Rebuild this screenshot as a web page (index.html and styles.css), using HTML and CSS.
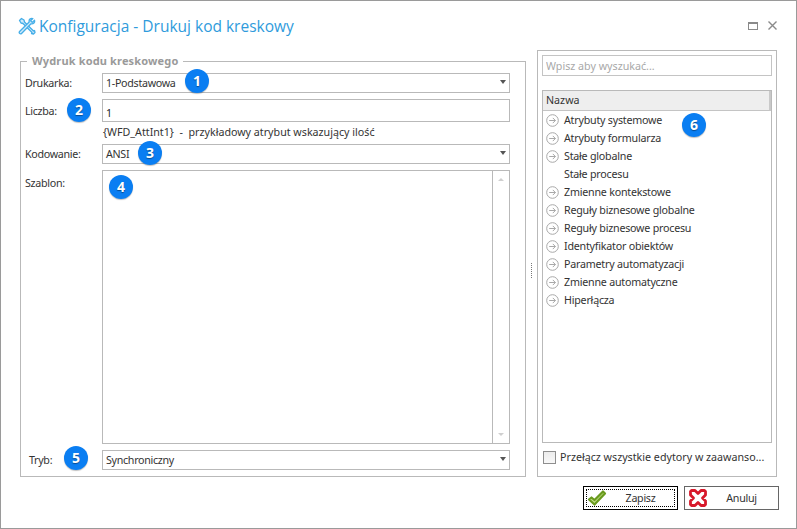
FILE: index.html
```html
<!DOCTYPE html>
<html lang="pl">
<head>
    <meta charset="UTF-8">
    <title>Konfiguracja - Drukuj kod kreskowy</title>
    <link rel="stylesheet" href="styles.css">
</head>
<body>
    <div class="window">
        <div class="title-bar">
            <svg class="title-icon" width="18" height="18" viewBox="0 0 18 18">
                <path d="M1.5 3.5 L3.5 1.5 L6 3 L6.5 5 L15.5 14 L16.5 13.5 L17 15.5 L15.5 17 L13.5 16.5 L14 15.5 L5 6.5 L3 6 Z" fill="#cfeafa" stroke="#45aee8" stroke-width="1.3" stroke-linejoin="round"/>
                <path d="M16.5 3.2 L14.2 5.4 L12.6 3.8 L14.8 1.5 C12.6 0.8 10.6 2.6 11.2 5 L1.8 14.2 C1 15 1 15.8 1.6 16.4 C2.2 17 3 17 3.8 16.2 L13 6.8 C15.4 7.4 17.2 5.4 16.5 3.2 Z" fill="#cfeafa" stroke="#45aee8" stroke-width="1.3" stroke-linejoin="round"/>
            </svg>
            <h1 class="title">Konfiguracja - Drukuj kod kreskowy</h1>
            <div class="win-buttons">
                <svg width="10" height="8" viewBox="0 0 10 8"><rect x="0.5" y="0.5" width="9" height="7" fill="none" stroke="#8a8a8a"/><rect x="0" y="0" width="10" height="2" fill="#8a8a8a"/></svg>
                <svg width="9" height="9" viewBox="0 0 9 9"><path d="M0.5 0.5 L8.5 8.5 M8.5 0.5 L0.5 8.5" stroke="#8a8a8a" stroke-width="1.4"/></svg>
            </div>
        </div>

        <div class="main">
            <fieldset class="group">
                <legend>Wydruk kodu kreskowego</legend>
                <div class="form-row row-select">
                    <label>Drukarka:</label>
                    <div class="select">1-Podstawowa<span class="arrow"></span></div>
                </div>
                <div class="form-row row-count">
                    <label>Liczba:</label>
                    <input class="input" type="text" value="1">
                </div>
                <div class="hint">{WFD_AttInt1}&nbsp; - &nbsp;przykładowy atrybut wskazujący ilość</div>
                <div class="form-row row-select">
                    <label>Kodowanie:</label>
                    <div class="select">ANSI<span class="arrow"></span></div>
                </div>
                <div class="form-row row-template">
                    <label>Szablon:</label>
                    <div class="template">
                        <div class="scrollbar">
                            <span class="scroll-up"></span>
                            <span class="scroll-down"></span>
                        </div>
                    </div>
                </div>
                <div class="form-row row-select">
                    <label class="label-mode">Tryb:</label>
                    <div class="select">Synchroniczny<span class="arrow"></span></div>
                </div>
            </fieldset>

            <div class="splitter"><span class="grip"></span></div>

            <div class="side">
                <input class="search" type="text" placeholder="Wpisz aby wyszukać...">
                <div class="tree">
                    <div class="tree-head">Nazwa</div>
                    <div class="tree-row"><svg class="go" viewBox="0 0 13 13"><use href="#go-icon"/></svg>Atrybuty systemowe</div>
                    <div class="tree-row"><svg class="go" viewBox="0 0 13 13"><use href="#go-icon"/></svg>Atrybuty formularza</div>
                    <div class="tree-row"><svg class="go" viewBox="0 0 13 13"><use href="#go-icon"/></svg>Stałe globalne</div>
                    <div class="tree-row"><span class="go"></span>Stałe procesu</div>
                    <div class="tree-row"><svg class="go" viewBox="0 0 13 13"><use href="#go-icon"/></svg>Zmienne kontekstowe</div>
                    <div class="tree-row"><svg class="go" viewBox="0 0 13 13"><use href="#go-icon"/></svg>Reguły biznesowe globalne</div>
                    <div class="tree-row"><svg class="go" viewBox="0 0 13 13"><use href="#go-icon"/></svg>Reguły biznesowe procesu</div>
                    <div class="tree-row"><svg class="go" viewBox="0 0 13 13"><use href="#go-icon"/></svg>Identyfikator obiektów</div>
                    <div class="tree-row"><svg class="go" viewBox="0 0 13 13"><use href="#go-icon"/></svg>Parametry automatyzacji</div>
                    <div class="tree-row"><svg class="go" viewBox="0 0 13 13"><use href="#go-icon"/></svg>Zmienne automatyczne</div>
                    <div class="tree-row"><svg class="go" viewBox="0 0 13 13"><use href="#go-icon"/></svg>Hiperłącza</div>
                </div>
                <div class="switch">
                    <span class="checkbox"></span>
                    <span>Przełącz wszystkie edytory w zaawanso...</span>
                </div>
            </div>
        </div>

        <div class="footer">
            <button class="btn btn-default">
                <span class="btn-focus">
                    <svg width="20" height="18" viewBox="0 0 20 18"><path d="M2 10.5 L4.5 8.5 L7.5 11 L16 2.5 L18 4.5 L7.5 15.5 Z" fill="#bcdc80" stroke="#6a9a1e" stroke-width="2.2" stroke-linejoin="round"/></svg>
                    <span class="btn-text">Zapisz</span>
                </span>
            </button>
            <button class="btn">
                <span class="btn-focus no-focus">
                    <svg width="20" height="18" viewBox="0 0 18 18"><path d="M2.5 1.5 L6 1.5 L9 4.5 L12 1.5 L15.5 1.5 L16.5 2.5 L16.5 6 L13.5 9 L16.5 12 L16.5 15.5 L15.5 16.5 L12 16.5 L9 13.5 L6 16.5 L2.5 16.5 L1.5 15.5 L1.5 12 L4.5 9 L1.5 6 L1.5 2.5 Z" fill="#fff" stroke="#d7182a" stroke-width="2.8" stroke-linejoin="round"/></svg>
                    <span class="btn-text">Anuluj</span>
                </span>
            </button>
        </div>

        <span class="badge badge-1">1</span>
        <span class="badge badge-2">2</span>
        <span class="badge badge-3">3</span>
        <span class="badge badge-4">4</span>
        <span class="badge badge-5">5</span>
        <span class="badge badge-6">6</span>
    </div>

    <svg width="0" height="0" class="defs">
        <symbol id="go-icon" viewBox="0 0 13 13">
            <circle cx="6.5" cy="6.5" r="5.8" fill="none" stroke="#a8a8a8"/>
            <path d="M3.2 6.5 H9.4 M6.8 3.9 L9.4 6.5 L6.8 9.1" fill="none" stroke="#a8a8a8"/>
        </symbol>
    </svg>
</body>
</html>
```

FILE: styles.css
```css
* {
    box-sizing: border-box;
}
html, body {
    margin: 0;
    padding: 0;
    background: #fff;
}
body {
    font-family: "Noto Sans", Arial, sans-serif;
    font-size: 10.7px;
    color: #333;
}
.window {
    position: relative;
    width: 797px;
    height: 529px;
    border: 1px solid #9a9a9a;
    background: #fff;
    overflow: hidden;
}
.title-bar {
    display: flex;
    align-items: center;
    height: 49px;
    padding: 0 19px 0 17px;
}
.title-icon {
    margin-right: 3px;
}
.title {
    margin: 0;
    font-family: "Open Sans", Arial, sans-serif;
    font-size: 15.5px;
    font-weight: 400;
    color: #2f9bdc;
}
.win-buttons {
    display: flex;
    align-items: center;
    gap: 10px;
    margin-left: auto;
}
.main {
    display: flex;
    height: 427px;
    padding: 0 19px;
}
.group {
    width: 506px;
    height: 423px;
    margin: 4px 0 0;
    padding: 5px 15px 0 4px;
    border: 1px solid #b9b9b9;
    min-width: 0;
}
.group legend {
    margin-left: 2px;
    padding: 0 5px;
    font-size: 11px;
    font-weight: 700;
    letter-spacing: 0.15px;
    line-height: 14px;
    color: #9a9a9a;
}
.form-row {
    display: flex;
}
.form-row label {
    width: 77px;
    flex: none;
    letter-spacing: -0.3px;
}
.row-select {
    height: 20px;
    margin-bottom: 6px;
    align-items: center;
}
.row-count {
    height: 23px;
    align-items: center;
}
.label-mode {
    padding-left: 4px;
}
.select {
    position: relative;
    flex: 1;
    height: 20px;
    padding: 0 3px;
    border: 1px solid #b9b9b9;
    letter-spacing: -0.3px;
    line-height: 18px;
}
.arrow {
    position: absolute;
    right: 3px;
    top: 6px;
    width: 0;
    height: 0;
    border-left: 3.5px solid transparent;
    border-right: 3.5px solid transparent;
    border-top: 4px solid #555;
}
.input {
    flex: 1;
    height: 23px;
    padding: 4px 3px 0;
    border: 1px solid #b9b9b9;
    border-radius: 0;
    outline: none;
    font: inherit;
    color: #222;
}
.hint {
    height: 22px;
    padding: 3px 0 0 78px;
    line-height: 14px;
}
.row-template {
    height: 274px;
    margin-bottom: 6px;
}
.row-template label {
    padding-top: 6px;
}
.template {
    flex: 1;
    display: flex;
    justify-content: flex-end;
    border: 1px solid #b9b9b9;
}
.scrollbar {
    position: relative;
    width: 17px;
    border-left: 1px solid #b9b9b9;
}
.scroll-up, .scroll-down {
    position: absolute;
    left: 5px;
    width: 0;
    height: 0;
    border-left: 3px solid transparent;
    border-right: 3px solid transparent;
}
.scroll-up {
    top: 7px;
    border-bottom: 3px solid #cfcfcf;
}
.scroll-down {
    bottom: 7px;
    border-top: 3px solid #cfcfcf;
}
.splitter {
    display: flex;
    align-items: center;
    justify-content: center;
    width: 11px;
    padding-top: 14px;
}
.grip {
    width: 1px;
    height: 15px;
    background: repeating-linear-gradient(#777 0 1px, transparent 1px 2px);
}
.side {
    display: flex;
    flex-direction: column;
    width: 240px;
    padding: 4px 4px 0;
    border: 1px solid #b9b9b9;
}
.search {
    flex: none;
    height: 21px;
    padding: 0 3px;
    border: 1px solid #c4c4c4;
    border-radius: 0;
    outline: none;
    font: inherit;
}
.search::placeholder {
    color: #a8a8a8;
    opacity: 1;
}
.tree {
    flex: none;
    height: 353px;
    margin-top: 14px;
    border: 1px solid #b9b9b9;
}
.tree-head {
    height: 20px;
    padding-left: 3px;
    border-bottom: 1px solid #c4c4c4;
    border-right: 2px solid #c9c9c9;
    background: #eeeeee;
    line-height: 18px;
}
.tree-row {
    display: flex;
    align-items: center;
    height: 18px;
    padding-left: 3px;
    letter-spacing: -0.22px;
}
.go {
    flex: none;
    width: 13px;
    height: 13px;
    margin-right: 5px;
}
.switch {
    display: flex;
    align-items: center;
    gap: 4px;
    margin-top: 7px;
    margin-left: 1px;
}
.checkbox {
    width: 13px;
    height: 13px;
    border: 1px solid #8e8e8e;
    background: linear-gradient(#ececec, #f8f8f8);
}
.footer {
    display: flex;
    justify-content: flex-end;
    gap: 6px;
    padding: 9px 17px 0 0;
}
.btn {
    width: 95px;
    height: 24px;
    padding: 2px;
    border: 1px solid #666;
    background: #fff;
    font: inherit;
    letter-spacing: -0.3px;
    color: #333;
}
.btn-default {
    border-color: #000;
}
.btn-focus {
    display: flex;
    align-items: center;
    height: 100%;
    border: 1px dotted #000;
}
.no-focus {
    border-color: transparent;
}
.btn-text {
    flex: 1;
    text-align: center;
}
.badge {
    position: absolute;
    width: 24px;
    height: 24px;
    border-radius: 50%;
    background: #0a7ef2;
    box-shadow: 0 1px 1px rgba(0,0,0,0.25);
    color: #fff;
    font-family: "Noto Sans", Arial, sans-serif;
    font-size: 14px;
    font-weight: 700;
    line-height: 24px;
    text-align: center;
    text-shadow: 0 1px 1px rgba(0,0,0,0.4);
}
.badge-1 { left: 184px; top: 68px; }
.badge-2 { left: 66px; top: 97px; }
.badge-3 { left: 137px; top: 140px; }
.badge-4 { left: 108px; top: 174px; }
.badge-5 { left: 63px; top: 445px; }
.badge-6 { left: 681px; top: 112px; }
.defs {
    position: absolute;
}
```
